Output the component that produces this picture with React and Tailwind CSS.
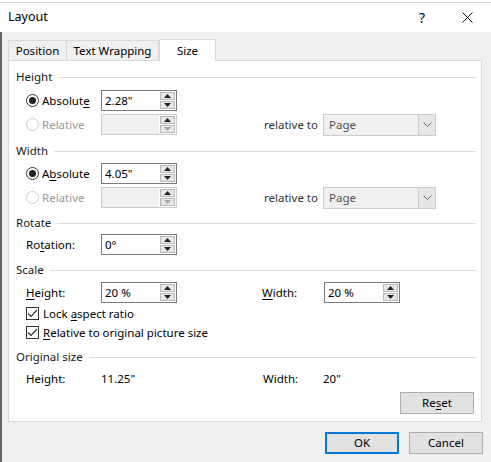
import React from 'react';

const font = { fontFamily: '"Noto Sans", "Open Sans", sans-serif' };

function U({ children }) {
  return <span className="underline underline-offset-2">{children}</span>;
}

function Tri({ down, dim }) {
  return (
    <svg width="7" height="4" viewBox="0 0 7 4" className="block">
      {down ? (
        <path d="M0 0 H7 L3.5 4 Z" fill={dim ? '#a8a8a8' : '#222'} />
      ) : (
        <path d="M0 4 H7 L3.5 0 Z" fill={dim ? '#a8a8a8' : '#222'} />
      )}
    </svg>
  );
}

function Spin({ value, disabled }) {
  return (
    <div
      className={`flex h-[21px] w-[76px] border ${
        disabled ? 'border-[#cccccc] bg-[#f0f0f0]' : 'border-[#7a7a7a] bg-white'
      }`}
    >
      <div className="flex-1 pl-[3px] leading-[19px] text-black">{value}</div>
      <div className="w-[17px] flex flex-col gap-[1px] p-[1px] bg-white">
        <div className="flex-1 flex items-center justify-center bg-[#e6e6e6] border border-[#b9b9b9]">
          <Tri />
        </div>
        <div className="flex-1 flex items-center justify-center bg-[#e6e6e6] border border-[#b9b9b9]">
          <Tri down dim={disabled} />
        </div>
      </div>
    </div>
  );
}

function Select() {
  return (
    <div className="flex h-[22px] w-[113px] border border-[#cccccc] bg-[#f0f0f0]">
      <div className="flex-1 pl-[5px] leading-[20px] text-[#555555]">Page</div>
      <div className="w-[17px] border-l border-[#cccccc] bg-[#e6e6e6] flex items-center justify-center">
        <svg width="9" height="5" viewBox="0 0 9 5">
          <path d="M0.5 0.5 L4.5 4.5 L8.5 0.5" fill="none" stroke="#6d6d6d" strokeWidth="1" />
        </svg>
      </div>
    </div>
  );
}

function Radio({ on, disabled }) {
  return (
    <div
      className={`w-[13px] h-[13px] rounded-full border flex items-center justify-center bg-white ${
        disabled ? 'border-[#cccccc]' : 'border-[#333333]'
      }`}
    >
      {on && <div className="w-[7px] h-[7px] rounded-full bg-[#222222]" />}
    </div>
  );
}

function Check() {
  return (
    <div className="w-[13px] h-[13px] border border-[#333333] bg-white flex items-center justify-center">
      <svg width="11" height="9" viewBox="0 0 11 9">
        <path d="M1 4.5 L4 7.5 L10 1" fill="none" stroke="#333" strokeWidth="1.2" />
      </svg>
    </div>
  );
}

function Header({ title, className }) {
  return (
    <div className={`flex items-center h-[16px] ${className}`}>
      <span className="text-[#1a1a1a]">{title}</span>
      <div className="flex-1 ml-[6px] border-t border-[#dcdcdc]" />
    </div>
  );
}

function RadioRow({ label, on, disabled, value, className, select }) {
  return (
    <div className={`flex items-center h-[21px] pl-[10px] ${className}`}>
      <Radio on={on} disabled={disabled} />
      <span className={`ml-[3px] w-[59px] ${disabled ? 'text-[#9a9a9a]' : 'text-black'}`}>{label}</span>
      <Spin value={value} disabled={disabled} />
      {select && (
        <>
          <span className="ml-[87px] w-[59px] text-[#333333]">relative to</span>
          <Select />
        </>
      )}
    </div>
  );
}

export default function App() {
  return (
    <div className="w-[491px] h-[462px] bg-[#f0f0f0] text-[11.5px] flex flex-col overflow-hidden" style={font}>
      <div className="h-[3px] bg-white border-b border-[#d0d0d0]" />
      <div className="h-[29px] bg-white flex items-center pl-[8px] text-black">
        <span className="text-[12.5px]">Layout</span>
        <div className="flex-1" />
        <span className="text-[14px] mr-[37px]">?</span>
        <svg width="11" height="11" viewBox="0 0 11 11" className="mr-[18px]">
          <path d="M0.5 0.5 L10.5 10.5 M10.5 0.5 L0.5 10.5" stroke="#111" strokeWidth="1" />
        </svg>
      </div>
      <div className="flex-1 flex flex-col border-l-2 border-[#5d666c] pl-[6px] pr-[9px]">
        <div className="flex items-end h-[28px] pt-[7px]">
          <div className="h-[20px] w-[59px] border border-b-0 border-[#d9d9d9] flex items-center justify-center text-black">
            Position
          </div>
          <div className="h-[20px] w-[92px] border border-b-0 border-l-0 border-[#d9d9d9] flex items-center justify-center text-black">
            Text Wrapping
          </div>
          <div className="h-[22px] w-[57px] -mb-[1px] bg-white border border-b-0 border-[#d9d9d9] flex items-center justify-center text-black relative z-10">
            Size
          </div>
        </div>
        <div className="h-[362px] bg-white border border-[#d9d9d9] flex flex-col pl-[7px] pr-[5px] pt-[8px]">
          <Header title="Height" />
          <RadioRow className="mt-[5px]" on label={<>Absolut<U>e</U></>} value={'2.28"'} />
          <RadioRow className="mt-[3px]" disabled label="Relative" value="" select />
          <Header title="Width" className="mt-[8px]" />
          <RadioRow className="mt-[4px]" on label={<>A<U>b</U>solute</>} value={'4.05"'} />
          <RadioRow className="mt-[3px]" disabled label="Relative" value="" select />
          <Header title="Rotate" className="mt-[7px]" />
          <div className="flex items-center h-[21px] pl-[10px] mt-[3px]">
            <span className="w-[75px] text-black">Ro<U>t</U>ation:</span>
            <Spin value={'0°'} />
          </div>
          <Header title="Scale" className="mt-[7px]" />
          <div className="flex items-center h-[21px] pl-[10px] mt-[4px]">
            <span className="w-[75px] text-black"><U>H</U>eight:</span>
            <Spin value="20 %" />
            <span className="ml-[85px] w-[62px] text-black"><U>W</U>idth:</span>
            <Spin value="20 %" />
          </div>
          <div className="flex items-center h-[19px] pl-[10px] mt-[1px] text-black">
            <Check />
            <span className="ml-[4px]">Lock <U>a</U>spect ratio</span>
          </div>
          <div className="flex items-center h-[19px] pl-[10px] text-black">
            <Check />
            <span className="ml-[4px]"><U>R</U>elative to original picture size</span>
          </div>
          <Header title="Original size" className="mt-[7px]" />
          <div className="flex items-center h-[18px] pl-[10px] mt-[5px] text-black">
            <span className="w-[75px]">Height:</span>
            <span className="w-[162px]">11.25"</span>
            <span className="w-[60px]">Width:</span>
            <span>20"</span>
          </div>
          <div className="flex justify-end mt-[4px] pr-[2px]">
            <button className="h-[22px] w-[74px] bg-[#e1e1e1] border border-[#adadad] text-black">
              Re<U>s</U>et
            </button>
          </div>
        </div>
        <div className="flex justify-end gap-[10px] mt-[10px] -mr-[1px]">
          <button className="h-[22px] w-[74px] bg-[#e1e1e1] border-2 border-[#0078d7] text-black">OK</button>
          <button className="h-[22px] w-[74px] bg-[#e1e1e1] border border-[#adadad] text-black">Cancel</button>
        </div>
      </div>
    </div>
  );
}
